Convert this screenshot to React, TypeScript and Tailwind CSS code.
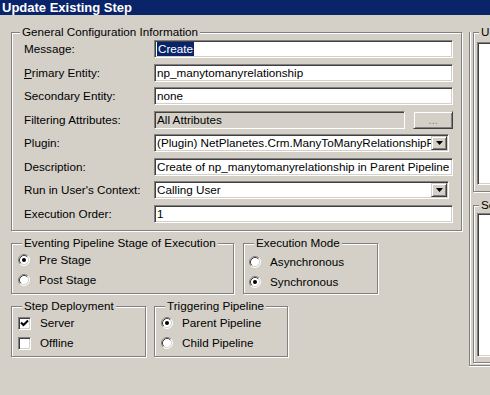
import type { ReactNode } from 'react';

const sunken =
  'border border-t-[#808080] border-l-[#808080] border-b-white border-r-white shadow-[inset_1px_1px_0_#404040,inset_-1px_-1px_0_#d4d0c8]';
const raised =
  'border border-t-[#d4d0c8] border-l-[#d4d0c8] border-b-[#404040] border-r-[#404040] shadow-[inset_1px_1px_0_#fff,inset_-1px_-1px_0_#808080]';
const etched = 'border border-[#808080] shadow-[inset_1px_1px_0_#fff,1px_1px_0_#fff]';

function Group({ label, className, labelLeft = 'left-[10px]', children }: { label: string; className: string; labelLeft?: string; children?: ReactNode }) {
  return (
    <div className={`relative ${etched} ${className}`}>
      <span className={`absolute top-[-8px] ${labelLeft} whitespace-nowrap bg-[#d4d0c8] px-[2px] leading-[14px]`}>{label}</span>
      {children}
    </div>
  );
}

function Radio({ checked }: { checked?: boolean }) {
  return (
    <svg width="12" height="12" viewBox="0 0 12 12" className="shrink-0">
      <circle cx="6" cy="6" r="5" fill="#fff" />
      <path d="M2.11 9.89 A5.5 5.5 0 0 1 9.89 2.11" stroke="#808080" fill="none" />
      <path d="M9.89 2.11 A5.5 5.5 0 0 1 2.11 9.89" stroke="#fff" fill="none" />
      <path d="M2.82 9.18 A4.5 4.5 0 0 1 9.18 2.82" stroke="#404040" fill="none" />
      <path d="M9.18 2.82 A4.5 4.5 0 0 1 2.82 9.18" stroke="#d4d0c8" fill="none" />
      {checked && <circle cx="6" cy="6" r="2" fill="#000" />}
    </svg>
  );
}

function Check({ checked }: { checked?: boolean }) {
  return (
    <span className={`flex h-[13px] w-[13px] shrink-0 items-center justify-center bg-white ${sunken}`}>
      {checked && (
        <svg width="9" height="9" viewBox="0 0 9 9">
          <path d="M1 3.5 L3.5 6 L8 1.5" stroke="#000" strokeWidth="2" fill="none" />
        </svg>
      )}
    </span>
  );
}

function Option({ label, children }: { label: string; children: ReactNode }) {
  return (
    <div className="flex h-[20px] items-center gap-[9px]">
      {children}
      <span className="whitespace-nowrap">{label}</span>
    </div>
  );
}

function DropArrow() {
  return (
    <span className={`flex h-full w-[16px] shrink-0 items-center justify-center bg-[#d4d0c8] ${raised}`}>
      <svg width="7" height="4" viewBox="0 0 7 4">
        <path d="M0 0 H7 L3.5 4 Z" fill="#000" />
      </svg>
    </span>
  );
}

function Row({ label, children }: { label: ReactNode; children: ReactNode }) {
  return (
    <div className="flex h-[18px] items-center">
      <span className="w-[130px] shrink-0 whitespace-nowrap">{label}</span>
      {children}
    </div>
  );
}

function TextBox({ value, className = 'flex-1', disabled }: { value: ReactNode; className?: string; disabled?: boolean }) {
  return (
    <div className={`flex h-[18px] items-center overflow-hidden whitespace-nowrap pl-[2px] ${disabled ? 'bg-[#d4d0c8]' : 'bg-white'} ${sunken} ${className}`}>
      {value}
    </div>
  );
}

function Select({ value }: { value: string }) {
  return (
    <div className={`flex h-[18px] w-[295px] items-stretch bg-white p-[1px] ${sunken}`}>
      <span className="flex-1 overflow-hidden whitespace-nowrap pl-[1px] leading-[14px]">{value}</span>
      <DropArrow />
    </div>
  );
}

export default function App() {
  return (
    <div className="flex h-[395px] w-[490px] flex-col overflow-hidden bg-[#d4d0c8] font-['Liberation_Sans',Arial,sans-serif] text-[11.7px] text-black">
      <div className="h-[15px] shrink-0 bg-[#0a246a] pl-[2px] text-[13px] font-bold leading-[15px] text-white">Update Existing Step</div>

      <div className="flex">
        <div className="flex w-[462px] shrink-0 flex-col pl-[11px] pt-[17px]">
          <Group label="General Configuration Information" labelLeft="left-[8px]" className="flex h-[199px] w-[451px] flex-col gap-[5.5px] pl-[12px] pr-[8px] pt-[7px]">
            <Row label="Message:">
              <TextBox value={<span className="bg-[#0a246a] px-[1px] leading-[14px] text-white">Create</span>} />
            </Row>
            <Row label={<><span className="underline">P</span>rimary Entity:</>}>
              <TextBox value="np_manytomanyrelationship" />
            </Row>
            <Row label="Secondary Entity:">
              <TextBox value="none" />
            </Row>
            <Row label="Filtering Attributes:">
              <TextBox value="All Attributes" className="w-[254px]" disabled />
              <button type="button" className={`ml-[8px] h-[18px] w-[40px] bg-[#d4d0c8] text-[11px] leading-[12px] text-[#808080] ${raised}`}>...</button>
            </Row>
            <Row label="Plugin:">
              <Select value="(Plugin) NetPlanetes.Crm.ManyToManyRelationshipPlugin" />
            </Row>
            <Row label="Description:">
              <TextBox value="Create of np_manytomanyrelationship in Parent Pipeline" />
            </Row>
            <Row label="Run in User's Context:">
              <Select value="Calling User" />
            </Row>
            <Row label="Execution Order:">
              <TextBox value="1" />
            </Row>
          </Group>

          <div className="mt-[12px] flex">
            <Group label="Eventing Pipeline Stage of Execution" className="flex h-[51px] w-[223px] flex-col pl-[6px] pt-[6px]">
              <Option label="Pre Stage"><Radio checked /></Option>
              <Option label="Post Stage"><Radio /></Option>
            </Group>
            <Group label="Execution Mode" className="ml-[9px] flex h-[51px] w-[135px] flex-col pl-[5px] pt-[8px]">
              <Option label="Asynchronous"><Radio /></Option>
              <Option label="Synchronous"><Radio checked /></Option>
            </Group>
          </div>

          <div className="mt-[12px] flex">
            <Group label="Step Deployment" className="flex h-[51px] w-[135px] flex-col pl-[6px] pt-[6px]">
              <Option label="Server"><Check checked /></Option>
              <Option label="Offline"><Check /></Option>
            </Group>
            <Group label="Triggering Pipeline" className="ml-[8px] flex h-[51px] w-[134px] flex-col pl-[6px] pt-[6px]">
              <Option label="Parent Pipeline"><Radio checked /></Option>
              <Option label="Child Pipeline"><Radio /></Option>
            </Group>
          </div>
        </div>

        <div className="ml-[7px] mt-[17px] flex h-[334px] w-[60px] shrink-0 flex-col border-b border-l border-[#808080] pl-[3px] shadow-[inset_1px_0_0_#fff,0_1px_0_#fff]">
          <Group label="Unsecure Configuration" labelLeft="left-[5px]" className="h-[160px] w-[50px] pl-[3px] pt-[9px]">
            <div className={`h-[143px] bg-white ${sunken}`} />
          </Group>
          <Group label="Secure Configuration" labelLeft="left-[5px]" className="mt-[13px] h-[158px] w-[50px] pl-[3px] pt-[7px]">
            <div className={`h-[144px] bg-white ${sunken}`} />
          </Group>
        </div>
      </div>
    </div>
  );
}
